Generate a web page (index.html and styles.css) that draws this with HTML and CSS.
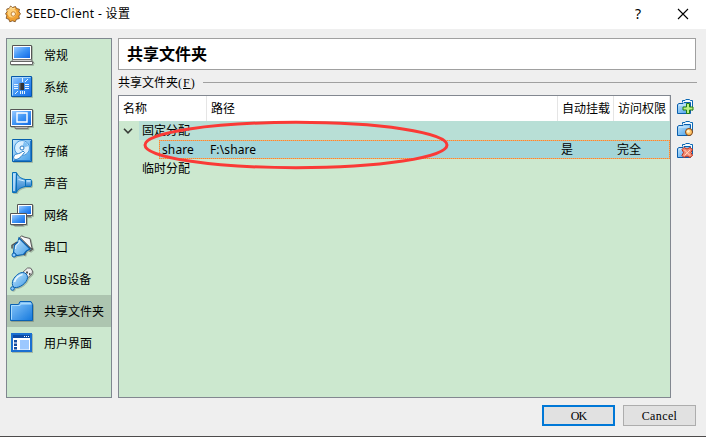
FILE: index.html
```html
<!DOCTYPE html>
<html lang="zh-CN">
<head>
<meta charset="utf-8">
<title>SEED-Client - 设置</title>
<link rel="stylesheet" href="styles.css">
</head>
<body>
<svg class="defs" width="0" height="0" aria-hidden="true">
  <defs>
    <linearGradient id="screen" x1="0" y1="0" x2="1" y2="1"><stop offset="0" stop-color="#9dcbff"/><stop offset=".5" stop-color="#3f95f5"/><stop offset="1" stop-color="#1168e6"/></linearGradient>
    <linearGradient id="soft" x1="0" y1="0" x2="1" y2="1"><stop offset="0" stop-color="#c6e6fb"/><stop offset="1" stop-color="#3f9ce8"/></linearGradient>
    <linearGradient id="horn" x1="0" y1="0" x2="0" y2="1"><stop offset="0" stop-color="#a5d6f8"/><stop offset="1" stop-color="#2379c9"/></linearGradient>
    <linearGradient id="fold" x1="0" y1="0" x2="1" y2="1"><stop offset="0" stop-color="#8cc9fa"/><stop offset="1" stop-color="#1478dd"/></linearGradient>
    <g id="folder">
      <path d="M5.500 3.500V1.500H8l.8-1h3.700l.8 1H15.500V11.500" fill="#f4fbff" stroke="#0b68b4"/>
      <path d="M.5 5.500 2 4.500H6l1-1H13.500V14.500H.5Z" fill="url(#soft)" stroke="#0b5eac"/>
      <path d="M2 6H12" stroke="#d9f1ff"/>
    </g>
  </defs>
</svg>
<div class="window">
  <header class="titlebar">
    <svg class="app-icon" width="16" height="18" viewBox="0 0 16 18">
      <path d="m5.500 1 2 1.500 3-1 1 2 3 .8-.6 2.500 1.600 2-1.700 2.200.6 2.500-3 .8-1.200 2.500-2.700-1-2.700 1-1-2.500-2.600-1 .6-2.600L.6 8.700l1.500-2L1.800 4l2.700-.6Z" fill="#f0a030" stroke="#72461a" stroke-width=".8"/>
      <path d="m4.500 4.500 1.500-2 1.500 1.500 2.500-1M2.500 6l1-1.500" stroke="#ffe5a3" fill="none" stroke-width="1.300"/>
      <circle cx="7" cy="8" r="4.500" fill="#ffd078"/><circle cx="8.300" cy="9" r="2.200" fill="#fff4dc" stroke="#b86a12" stroke-width=".8"/>
    </svg>
    <span class="title">SEED-Client - 设置</span>
    <span class="help">?</span>
    <svg class="close" width="12" height="12" viewBox="0 0 12 12"><path d="m1 1 10 10M11 1 1 11" stroke="#000" stroke-width="1.100"/></svg>
  </header>
  <main class="body">
    <nav class="sidebar">
      <div class="item"><svg width="24" height="24" viewBox="0 0 24 24"><path d="M2.500 2.500h19v14h-19z" fill="#fff" stroke="#555"/><path d="M4 4h16v11H4z" fill="url(#screen)"/><path d="m3 16.500-2.500 3h23l-2.500-3z" fill="#ccc" stroke="#777"/><path d="M.5 18.500h22v3H.5z" fill="#fff" stroke="#666"/></svg><span>常规</span></div>
      <div class="item"><svg width="24" height="24" viewBox="0 0 24 24"><path d="M1.500 1.500h20v20h-20z" fill="url(#screen)" stroke="#0757a8"/><path d="M2.500 20.500v-18h18" fill="none" stroke="#a8d8ff"/><path d="M9 8h5v7H9z" fill="#333"/><path d="M9 8h1.500v7H9z" fill="#777"/><path d="M4 9.500h4M4 11.500h4M4 13.500h4M15 9.500h4M15 11.500h4M15 13.500h4M12.500 3v4M10.500 16v3M12.500 16v3M14.500 16v3M18 4l-3 3M8 16l-3 3" stroke="#e6f4ff" fill="none"/></svg><span>系统</span></div>
      <div class="item"><svg width="24" height="24" viewBox="0 0 24 24"><path d="M.5 2.500h22v17H.5z" fill="#fff" stroke="#555"/><path d="M2 4h19v14H2z" fill="url(#screen)"/><path d="M7 6h10v9H7z" fill="none" stroke="#fff" stroke-width="1.400"/><path d="M5 20h13v1.500H5z" fill="#fff" stroke="#777"/></svg><span>显示</span></div>
      <div class="item"><svg width="24" height="24" viewBox="0 0 24 24"><path d="M2.500.5h19v22h-19z" fill="url(#soft)" stroke="#075fac"/><path d="M20.500 2v19.500H4" fill="none" stroke="#237bcd"/><circle cx="12" cy="9" r="7.500" fill="#d9efff" stroke="#4a9bdd"/><path d="m12 9 2-6.500a7 7 0 0 1 4.500 4.500z" fill="#7fc0f3"/><circle cx="12" cy="9" r="2" fill="#fff" stroke="#2a7cc4"/><path d="M4 17c1-3 5-1 9-5l1.500 1.500C11 18 9 20 6 20.500c-2 0-3-1.500-2-3.500z" fill="#fff" stroke="#2c83cb"/></svg><span>存储</span></div>
      <div class="item"><svg width="24" height="24" viewBox="0 0 24 24"><path d="M12 8.500h9l.5 1v5l-.5 1h-9z" fill="url(#horn)" stroke="#0870b8"/><path d="M2.500 1.500h4c1 3.500 4 6 9 7v7c-5 1-8 3-9 6h-4z" fill="url(#horn)" stroke="#0870b8"/><path d="M6.500 2v19" stroke="#0870b8"/><path d="M4 3v17" stroke="#c4e7ff" stroke-width="1.500"/><path d="M8.500 8.500l6 1.500M17 10h3" stroke="#d2efff"/></svg><span>声音</span></div>
      <div class="item"><svg width="24" height="24" viewBox="0 0 24 24"><path d="M7.500 1.500h15v11h-15z" fill="#fff" stroke="#555"/><path d="M9 3h12v8H9z" fill="url(#screen)"/><path d="M17 13.500h4" stroke="#777" stroke-width="1.500"/><path d="M.5 10.500h16v11H.5z" fill="#fff" stroke="#555"/><path d="M2 12h13v8H2z" fill="url(#screen)"/><path d="M3.500 22.500h10" stroke="#777"/></svg><span>网络</span></div>
      <div class="item"><svg width="24" height="24" viewBox="0 0 24 24"><path d="M7 7 2 10.500v3M16 15.500l-1.500 5M20 12l2.500 2-3 2.500" fill="none" stroke="#555" stroke-width="1.500"/><path d="M9.500 3 11.500.8 14 2l6 1.500 2 9.500-1 1z" fill="#f7f7f7" stroke="#555"/><path d="M10.500 2.500 21 13" stroke="#888"/><path d="m9 3 11 11-3.500 2-3 3.500-7 1-3-3L4.500 10 8 7z" fill="url(#soft)" stroke="#075fae" stroke-width="1.200"/><path d="M5.500 14 6 10.500l3-2.500V5" stroke="#e6f7ff" fill="none"/><circle cx="4" cy="20" r="2" fill="#8bcaff" stroke="#075fae"/></svg><span>串口</span></div>
      <div class="item"><svg width="24" height="24" viewBox="0 0 24 24"><path d="m12.500 5.500 5-4.500h3l2 3-.5 3-5 4.500z" fill="#eee" stroke="#666"/><path d="M16 4.500h2v2h-2zM19 6h1.500v2H19z" fill="#555"/><path d="M12.500 5.500c-4 0-9 5-10 9-.5 3 0 5 2 6 5 1 13-5 13-10 0-3-2-5-5-5z" fill="url(#soft)" stroke="#075fae"/><path d="M4.500 15c1-4 5-7 8-7.500" stroke="#e8f8ff" stroke-width="1.600" fill="none"/><circle cx="2.500" cy="21.500" r="1.800" fill="#8bcaff" stroke="#075fae"/></svg><span>USB设备</span></div>
      <div class="item selected"><svg width="24" height="24" viewBox="0 0 24 24"><path d="M.5 5.500H8.500l1.500-3H21l1.500 3V21.500H.5z" fill="url(#fold)" stroke="#0a61b3"/><path d="M10 5 11 3.500h9.500l1 1.500" fill="#a5d5fa"/><path d="M1.500 20.500v-14h8.500l1-1.500h10.500" fill="none" stroke="#a8dcff"/></svg><span>共享文件夹</span></div>
      <div class="item"><svg width="24" height="24" viewBox="0 0 24 24"><path d="M2 3h19v17H2z" fill="#fff" stroke="#1a6fd0" stroke-width="2"/><path d="M3 4h17v3H3z" fill="#0c4aa5"/><path d="M14 5h1v1h-1zm2 0h1v1h-1zm2 0h1v1h-1z" fill="#fff"/><path d="M4 9h3v2.500H4zm0 3.500h3V15H4zm0 3.500h3v2.500H4z" fill="#164da0"/><path d="M10 9h9v9.500h-9z" fill="#9cc8ff"/></svg><span>用户界面</span></div>
    </nav>
    <section class="page">
      <h1 class="page-title">共享文件夹</h1>
      <div class="group-title"><span>共享文件夹<span class="latin">(<u>F</u>)</span></span></div>
      <div class="group">
        <div class="tree">
          <div class="row head"><span>名称</span><span>路径</span><span>自动挂载</span><span>访问权限</span></div>
          <div class="row branch"><svg class="chevron" width="10" height="6" viewBox="0 0 10 6"><path d="m1 .8 4 4 4-4" fill="none" stroke="#383c38" stroke-width="1.600"/></svg><span class="fill">固定分配</span></div>
          <div class="row leaf"><span class="name">share</span><span>F:\share</span><span>是</span><span>完全</span></div>
          <div class="row branch"><span class="plain">临时分配</span></div>
          <svg class="marker" width="306" height="52" viewBox="0 0 306 52"><ellipse cx="153" cy="26" rx="151" ry="22.700" fill="none" stroke="#fa3a36" stroke-width="3"/></svg>
        </div>
        <div class="tools">
          <svg width="18" height="18" viewBox="0 0 18 18"><use href="#folder"/><path d="M9.500 4.500h3v3.500H16v3h-3.500v3.500h-3V11H6V8h3.500z" fill="#bdf184" stroke="#237c12"/></svg>
          <svg width="18" height="18" viewBox="0 0 18 18"><use href="#folder"/><circle cx="12" cy="11" r="3.500" fill="#ffc66a" stroke="#874411"/><circle cx="11.300" cy="10.300" r="1.500" fill="#fff2ce"/></svg>
          <svg width="18" height="18" viewBox="0 0 18 18"><use href="#folder"/><path d="m7 4.500 3 1.500 3-1.500 2.500 2-1.500 3 1.500 3-2.500 2-3-1.500-3 1.500-2-2 1.500-3-1.500-3z" fill="#f28b72" stroke="#bf2c18"/><path d="m7.500 7 5.500 5.500m0-5.500-5.500 5.500" stroke="#ffd5bf"/></svg>
        </div>
      </div>
    </section>
  </main>
  <footer class="buttons"><button class="primary">OK</button><button>Cancel</button></footer>
</div>
</body>
</html>
```

FILE: styles.css
```css
* { box-sizing: border-box; }
body { margin: 0; background: #4d4b4b; font: 12px/16px "Noto Sans", "Noto Sans CJK SC", sans-serif; color: #000; overflow: hidden; }
.defs { display: block; }
svg { flex: none; }
.window { height: 436px; background: #efefef; display: flex; flex-direction: column; }
.titlebar { height: 29px; background: #fff; display: flex; align-items: center; padding: 0 17px 2px 5px; white-space: nowrap; }
.title { margin-left: 5px; flex: 1; letter-spacing: .33px; }
.help { font-size: 14px; margin-right: 36px; }
.body { height: 369px; padding: 9px 9px 0 6px; display: flex; gap: 6px; }
.sidebar { width: 106px; height: 360px; border: 1px solid #7f878f; background: #cce8cf; }
.item { height: 32px; display: flex; align-items: center; gap: 10px; padding-left: 3px; white-space: nowrap; }
.item svg { filter: drop-shadow(1px 1px 0 rgb(0 0 0 / 20%)); }
.item span { padding-top: 1px; }
.selected { background: #adc5b0; }
.page { flex: 1; min-width: 0; }
.page-title { height: 32px; width: 578px; margin: 0; padding-left: 8px; border: 1px solid #a0a0a0; background: #fff; font-size: 16px; line-height: 30px; font-weight: 700; }
.group-title { height: 25px; display: flex; align-items: center; gap: 7px; white-space: nowrap; }
.group-title::after { content: ""; flex: 1; height: 1px; background: #a0a0a0; }
.latin { font-family: "Liberation Serif", serif; letter-spacing: 1px; }
.group { display: flex; gap: 6px; }
.tree { position: relative; width: 553px; height: 303px; border: 1px solid #828790; background: #cce8cf; }
.row { display: grid; grid-template-columns: 88px 351px 56px 1fr; height: 19px; align-items: center; white-space: nowrap; }
.head { height: 25px; background: #fff; }
.head span { height: 25px; line-height: 25px; padding-left: 4px; border-right: 1px solid #e5e5e5; }
.branch { display: flex; }
.chevron { margin-left: 4px; }
.fill { flex: 1; margin-left: 6px; padding-left: 3px; background: #b8dfd6; line-height: 19px; }
.plain { padding-left: 23px; }
.leaf {
  --dots-x: repeating-linear-gradient(90deg, #ff8728 0 1px, #dfb084 1px 2px);
  --dots-y: repeating-linear-gradient(#ff8728 0 1px, #dfb084 1px 2px);
  margin-left: 40px;
  padding-left: 1px;
  grid-template-columns: 48px 351px 56px 1fr;
  background: var(--dots-x) 0 0 / 100% 1px no-repeat, var(--dots-x) 0 100% / 100% 1px no-repeat, var(--dots-y) 0 0 / 1px 100% no-repeat, var(--dots-y) 100% 0 / 1px 100% no-repeat, #a4d5d8;
}
.leaf span { padding-left: 2px; letter-spacing: .12px; }
.marker { position: absolute; left: 24px; top: 23px; }
.tools { display: flex; flex-direction: column; gap: 4px; padding-top: 4px; }
.buttons { display: flex; justify-content: flex-end; gap: 8px; padding: 7px 10px 0 0; }
button { width: 73px; height: 21px; padding: 0; border: 1px solid #adadad; background: #e1e1e1; color: #000; font: 12px/16px "Liberation Serif", serif; letter-spacing: .4px; }
.primary { border: 2px solid #0078d7; letter-spacing: -1px; }
```
